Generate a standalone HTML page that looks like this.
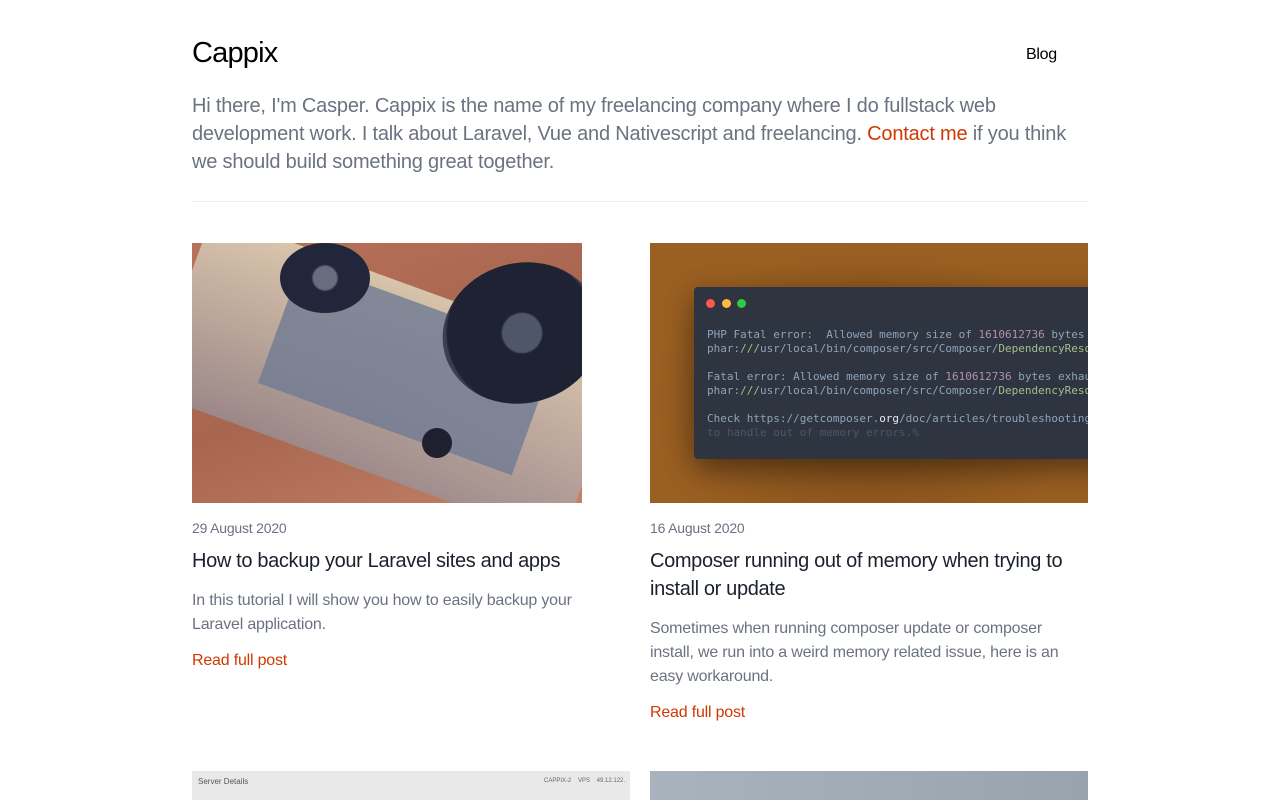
<!DOCTYPE html>
<html><head><meta charset="utf-8"><style>
*{margin:0;padding:0;box-sizing:border-box}
body{width:1280px;height:800px;overflow:hidden;background:#fff;font-family:"Liberation Sans",sans-serif;color:#1a202c}
.wrap{position:absolute;left:192px;width:896px}
.logo{position:absolute;left:192px;top:37px;font-size:29px;color:#000;letter-spacing:-0.8px}
.nav{position:absolute;left:1026px;top:46px;font-size:16px;color:#000;letter-spacing:-0.3px}
.intro{top:92px;font-size:20px;line-height:28px;color:#6b7280;letter-spacing:-0.2px}
.intro a{color:#d03801;text-decoration:none}
.hr{position:absolute;left:192px;top:201px;width:896px;height:1px;background:#edf0f3}
.card{position:absolute}
.date{font-size:14px;color:#6b7280;letter-spacing:-0.2px}
.title{font-size:20px;line-height:28px;color:#1a202c;letter-spacing:-0.35px}
.ex{font-size:16px;line-height:24px;color:#6b7280;letter-spacing:-0.2px}
.rm{font-size:16px;color:#d03801;letter-spacing:-0.2px}
.term{font-family:"DejaVu Sans Mono",monospace;font-size:11px;line-height:14px;white-space:pre;color:#8fa3b8}
</style></head><body>
<div class="logo">Cappix</div>
<div class="nav">Blog</div>
<div class="wrap intro">Hi there, I'm Casper. Cappix is the name of my freelancing company where I do fullstack web development work. I talk about Laravel, Vue and Nativescript and freelancing. <a>Contact me</a> if you think we should build something great together.</div>
<div class="hr"></div>

<div class="card" style="left:192px;top:243px;width:390px;height:260px;overflow:hidden;background:linear-gradient(160deg,#b7725a 0%,#a8654f 50%,#c38167 100%)">
 <div style="position:absolute;width:440px;height:190px;background:linear-gradient(180deg,rgba(230,225,200,.75),rgba(150,150,160,.7));transform:rotate(20deg);left:-25px;top:40px;border-radius:8px"></div>
 <div style="position:absolute;left:80px;top:60px;width:270px;height:130px;background:#6f7a94;transform:rotate(20deg);opacity:.8"></div>
 <div style="position:absolute;left:250px;top:20px;width:160px;height:140px;border-radius:50%;background:radial-gradient(circle,#50566a 0 18%,#1e2232 20% 70%,#3a3f52 72%);transform:rotate(-15deg)"></div>
 <div style="position:absolute;left:88px;top:0px;width:90px;height:70px;border-radius:50%;background:radial-gradient(circle,#6a6d80 0 20%,#22263a 24%)"></div>
 <div style="position:absolute;left:230px;top:185px;width:30px;height:30px;border-radius:50%;background:#1e2030"></div>
</div>
<div class="card" style="left:192px;top:520px;width:400px">
 <div class="date">29 August 2020</div>
 <div class="title" style="margin-top:11px">How to backup your Laravel sites and apps</div>
 <div class="ex" style="margin-top:14px">In this tutorial I will show you how to easily backup your Laravel application.</div>
 <div class="rm" style="margin-top:15px">Read full post</div>
</div>

<div class="card" style="left:650px;top:243px;width:438px;height:260px;overflow:hidden;background:radial-gradient(ellipse at 50% 60%,#7a4a18,#9a5f22 70%)">
 <div style="position:absolute;left:44px;top:44px;width:420px;height:172px;background:#2e3440;border-radius:4px;box-shadow:0 10px 30px rgba(0,0,0,.45)">
  <div style="position:absolute;left:12px;top:12px;width:9px;height:9px;border-radius:50%;background:#fc5753"></div>
  <div style="position:absolute;left:28px;top:12px;width:9px;height:9px;border-radius:50%;background:#fdbc40"></div>
  <div style="position:absolute;left:43px;top:12px;width:9px;height:9px;border-radius:50%;background:#33c748"></div>
  <div class="term" style="position:absolute;left:13px;top:41px">PHP Fatal error:  Allowed memory size of <span style="color:#b48ead">1610612736</span> bytes
phar:<span style="color:#a3be8c">///</span>usr/local/bin/composer/src/Composer/<span style="color:#a3be8c">DependencyResolver</span>

Fatal error: Allowed memory size of <span style="color:#b48ead">1610612736</span> bytes exhausted
phar:<span style="color:#a3be8c">///</span>usr/local/bin/composer/src/Composer/<span style="color:#a3be8c">DependencyResolver</span>

Check https://getcomposer.<span style="color:#e5e9f0">org</span>/doc/articles/troubleshooting
<span style="color:#4c566a">to handle out of memory errors.%</span></div>
 </div>
</div>
<div class="card" style="left:650px;top:520px;width:438px">
 <div class="date">16 August 2020</div>
 <div class="title" style="margin-top:11px">Composer running out of memory when trying to install or update</div>
 <div class="ex" style="margin-top:14px">Sometimes when running composer update or composer install, we run into a weird memory related issue, here is an easy workaround.</div>
 <div class="rm" style="margin-top:15px">Read full post</div>
</div>

<div class="card" style="left:192px;top:771px;width:438px;height:29px;background:#e9e9e9">
 <div style="position:absolute;left:6px;top:6px;font-size:8px;color:#555">Server Details</div>
 <div style="position:absolute;left:352px;top:7px;font-size:6px;color:#666">CAPPIX-2 &nbsp;&nbsp; VPS &nbsp;&nbsp; 49.12.122.</div>
</div>
<div class="card" style="left:650px;top:771px;width:438px;height:29px;background:linear-gradient(90deg,#a9b3bd,#98a3ad)"></div>
</body></html>
